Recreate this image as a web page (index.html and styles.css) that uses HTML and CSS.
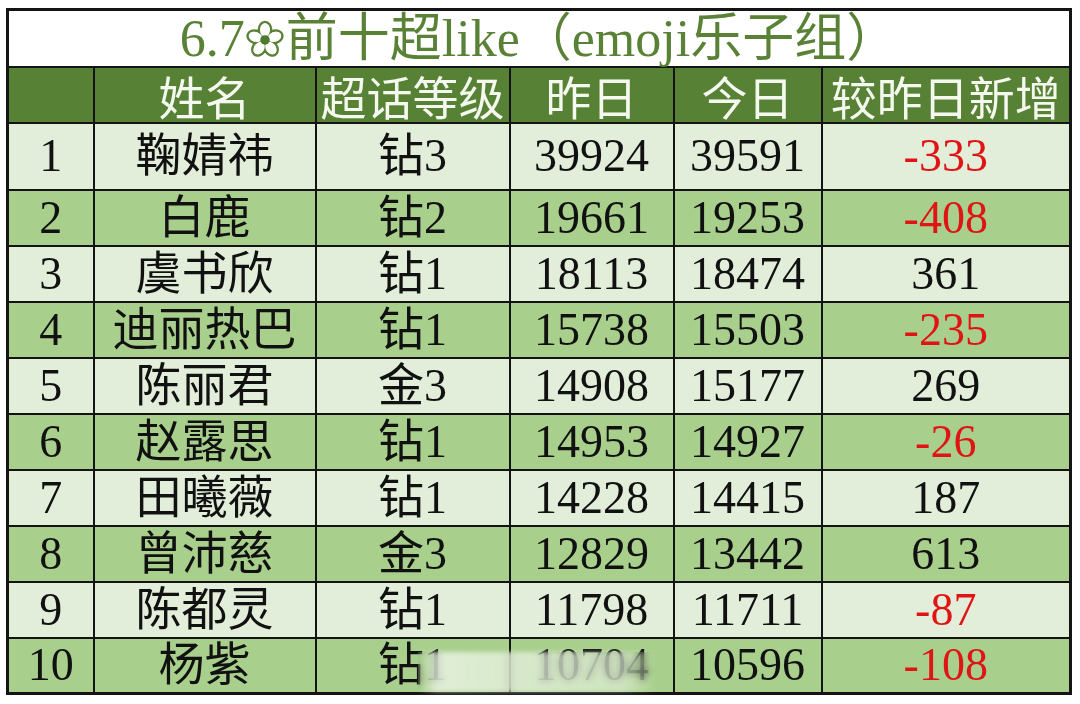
FILE: index.html
```html
<!DOCTYPE html>
<html lang="zh">
<head>
<meta charset="utf-8">
<title>6.7 前十超like</title>
<link rel="stylesheet" href="styles.css">
</head>
<body>
<div class="page">
  <table class="rank">
    <colgroup>
      <col class="c-no"><col class="c-name"><col class="c-lvl"><col class="c-y"><col class="c-t"><col class="c-d">
    </colgroup>
    <tr class="title-row"><td colspan="6" class="title">6.7<svg class="flower" viewBox="0 0 40 40" aria-label="❀"><g stroke="#5a8236" stroke-width="2.6" fill="none"><ellipse cx="20" cy="10.5" rx="6.5" ry="8.5"/><ellipse cx="20" cy="10.5" rx="6.5" ry="8.5" transform="rotate(72 20 21)"/><ellipse cx="20" cy="10.5" rx="6.5" ry="8.5" transform="rotate(144 20 21)"/><ellipse cx="20" cy="10.5" rx="6.5" ry="8.5" transform="rotate(216 20 21)"/><ellipse cx="20" cy="10.5" rx="6.5" ry="8.5" transform="rotate(288 20 21)"/></g><g fill="#ffffff"><ellipse cx="20" cy="10.5" rx="5.2" ry="7.2"/><ellipse cx="20" cy="10.5" rx="5.2" ry="7.2" transform="rotate(72 20 21)"/><ellipse cx="20" cy="10.5" rx="5.2" ry="7.2" transform="rotate(144 20 21)"/><ellipse cx="20" cy="10.5" rx="5.2" ry="7.2" transform="rotate(216 20 21)"/><ellipse cx="20" cy="10.5" rx="5.2" ry="7.2" transform="rotate(288 20 21)"/></g><circle cx="20" cy="21" r="5" fill="#4f7a2e"/></svg>前十超like（emoji乐子组）</td></tr>
    <tr class="head"><th></th><th>姓名</th><th>超话等级</th><th>昨日</th><th>今日</th><th>较昨日新增</th></tr>
    <tr class="light first"><td>1</td><td>鞠婧祎</td><td>钻3</td><td>39924</td><td>39591</td><td class="neg">-333</td></tr>
    <tr class="dark"><td>2</td><td>白鹿</td><td>钻2</td><td>19661</td><td>19253</td><td class="neg">-408</td></tr>
    <tr class="light"><td>3</td><td>虞书欣</td><td>钻1</td><td>18113</td><td>18474</td><td>361</td></tr>
    <tr class="dark"><td>4</td><td>迪丽热巴</td><td>钻1</td><td>15738</td><td>15503</td><td class="neg">-235</td></tr>
    <tr class="light"><td>5</td><td>陈丽君</td><td>金3</td><td>14908</td><td>15177</td><td>269</td></tr>
    <tr class="dark"><td>6</td><td>赵露思</td><td>钻1</td><td>14953</td><td>14927</td><td class="neg">-26</td></tr>
    <tr class="light"><td>7</td><td>田曦薇</td><td>钻1</td><td>14228</td><td>14415</td><td>187</td></tr>
    <tr class="dark"><td>8</td><td>曾沛慈</td><td>金3</td><td>12829</td><td>13442</td><td>613</td></tr>
    <tr class="light"><td>9</td><td>陈都灵</td><td>钻1</td><td>11798</td><td>11711</td><td class="neg">-87</td></tr>
    <tr class="dark last"><td>10</td><td>杨紫</td><td>钻1</td><td>10704</td><td>10596</td><td class="neg">-108</td></tr>
  </table>
  <div class="watermark"></div>
</div>
</body>
</html>
```

FILE: styles.css
```css
html, body {
  margin: 0;
  padding: 0;
  background: #ffffff;
}
.page {
  position: relative;
  padding: 8px 0 0 6px;
  width: 1080px;
  height: 704px;
  box-sizing: border-box;
}
.rank {
  border-collapse: collapse;
  table-layout: fixed;
  width: 1063px;
  border: 3px solid #141414;
  font-family: "Liberation Serif", "Noto Sans CJK SC", serif;
  font-size: 46px;
  color: #111111;
}
.c-no { width: 86px; }
.c-name { width: 222px; }
.c-lvl { width: 194px; }
.c-y { width: 164px; }
.c-t { width: 148px; }
.c-d { width: 249px; }
.rank td, .rank th {
  border: 2px solid #141414;
  padding: 0;
  text-align: center;
  vertical-align: middle;
  line-height: 1.1;
  white-space: nowrap;
}
.rank tr.title-row td {
  height: 54px;
  background: #ffffff;
  color: #5a8236;
  font-size: 52px;
  line-height: 50px;
  padding: 1px 0 0 0;
}
.flower {
  width: 38px;
  height: 38px;
  vertical-align: -2px;
  margin: 0 2px 0 1px;
}
.head th {
  height: 54px;
  background: #578134;
  color: #f4f8ee;
  font-weight: normal;
  font-family: "Noto Sans CJK SC", sans-serif;
  font-size: 46px;
  line-height: 50px;
}
.rank tr.light td { background: #e2eeda; }
.rank tr.dark td { background: #a8cf8c; }
.rank tr td { height: 54px; }
.rank tr.first td { height: 65px; }
.rank tr.last td { height: 53px; }
.neg { color: #e01414; }
.watermark {
  position: absolute;
  left: 418px;
  top: 652px;
  width: 240px;
  height: 40px;
  background: linear-gradient(90deg, rgba(255,255,255,0) 0%, rgba(255,255,255,0.85) 8%, rgba(255,255,255,0.7) 50%, rgba(255,255,255,0.6) 85%, rgba(255,255,255,0) 100%);
  -webkit-backdrop-filter: blur(3px);
  backdrop-filter: blur(3px);
  filter: blur(2px);
  opacity: 0.75;
}
```
